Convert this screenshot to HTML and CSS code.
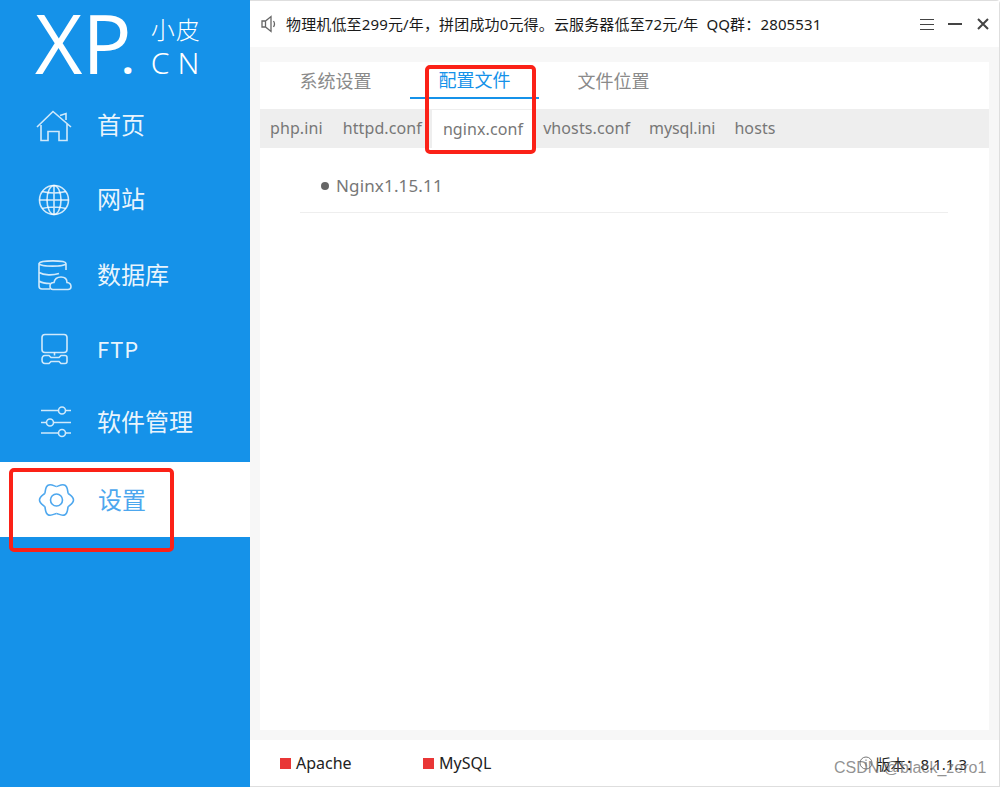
FILE: index.html
```html
<!DOCTYPE html>
<html lang="zh-CN">
<head>
<meta charset="utf-8">
<title>小皮面板</title>
<link rel="stylesheet" href="styles.css">
</head>
<body>
<div class="app">
  <aside class="sidebar">
    <div class="logo">
      <span class="logo-mark">XP<span class="logo-dot">.</span></span>
      <span class="logo-side"><span class="logo-cn">小皮</span><span class="logo-en">CN</span></span>
    </div>
    <nav class="nav">
      <a class="nav-item">
        <svg class="nav-icon" width="36" height="36" viewBox="0 0 36 36"><path d="M1 20 17 4.500 35 20M5 18V33.500H12V24.500H23V33.500H31V16M24 8.500 30 6.500V13"/></svg>
        <span class="nav-label">首页</span>
      </a>
      <a class="nav-item">
        <svg class="nav-icon" width="36" height="36" viewBox="0 0 36 36"><circle cx="18" cy="18" r="14.500"/><ellipse cx="18" cy="18" rx="7" ry="14.500"/><path d="M18 3.500V32.500M6 9.500Q18 12.500 30 9.500M3.500 18H32.500M6 26.500Q18 23.500 30 26.500"/></svg>
        <span class="nav-label nav-label-up">网站</span>
      </a>
      <a class="nav-item">
        <svg class="nav-icon" width="36" height="36" viewBox="0 0 36 36"><path d="M30 13V6.500C30 3 4 3 3 6.500V29Q3 32 6 32H14M3 6.500C3 10 30 10 30 6.500M3 15.500C8 18.500 17 18.500 23 16.500M3 24C6 26 11 26.500 14 26.500M17 32.500Q14 32.500 14 29 14 25.500 18 25.500 19 20 25 20 31 20 31 25.500 35 26 35 29.500 35 32.500 32 32.500Z"/></svg>
        <span class="nav-label">数据库</span>
      </a>
      <a class="nav-item">
        <svg class="nav-icon" width="36" height="36" viewBox="0 0 36 36"><rect x="6" y="2.500" width="25" height="18" rx="3"/><path d="M18.500 20.500V23.500M9 23.500H13L15 25.500H23L25 23.500H29Q31 23.500 31 25.500V29.500Q31 31.500 29 31.500H25L23 29.500H15L13 31.500H9Q6 31.500 6 27.500 6 23.500 9 23.500Z"/></svg>
        <span class="nav-label nav-label-latin">FTP</span>
      </a>
      <a class="nav-item nav-item-raised">
        <svg class="nav-icon" width="36" height="36" viewBox="0 0 36 36"><path d="M5 6.500H22M30 6.500H35M5 18.500H10M18 18.500H35M5 29H22M30 29H35"/><circle cx="26" cy="6.500" r="3.500"/><circle cx="14" cy="18.500" r="3.500"/><circle cx="26" cy="29" r="3.500"/></svg>
        <span class="nav-label">软件管理</span>
      </a>
      <a class="nav-item nav-item-active">
        <svg class="nav-icon" width="36" height="36" viewBox="0 0 36 36"><circle cx="20.500" cy="18" r="6"/><g transform="translate(20.500 18)"><path d="M11.690 -6.750C12.440 -5.450 17 -3.500 17 0 17 3.500 12.440 5.450 11.690 6.750"/><path d="M11.690 -6.750C12.440 -5.450 17 -3.500 17 0 17 3.500 12.440 5.450 11.690 6.750" transform="rotate(60)"/><path d="M11.690 -6.750C12.440 -5.450 17 -3.500 17 0 17 3.500 12.440 5.450 11.690 6.750" transform="rotate(120)"/><path d="M11.690 -6.750C12.440 -5.450 17 -3.500 17 0 17 3.500 12.440 5.450 11.690 6.750" transform="rotate(180)"/><path d="M11.690 -6.750C12.440 -5.450 17 -3.500 17 0 17 3.500 12.440 5.450 11.690 6.750" transform="rotate(240)"/><path d="M11.690 -6.750C12.440 -5.450 17 -3.500 17 0 17 3.500 12.440 5.450 11.690 6.750" transform="rotate(300)"/></g></svg>
        <span class="nav-label">设置</span>
      </a>
    </nav>
  </aside>

  <main class="main">
    <header class="topbar">
      <svg class="speaker" width="15" height="18" viewBox="0 0 15 18"><path d="M1 6H4.500L10 1.500V16.500L4.500 12H1ZM4.500 6V12M12.500 6Q14.500 9 12.500 12"/></svg>
      <p class="notice">物理机低至299元/年，拼团成功0元得。云服务器低至72元/年&nbsp;&nbsp;QQ群：2805531</p>
      <div class="window-btns">
        <svg width="14" height="14" viewBox="0 0 14 14"><path class="thin" d="M0 2.500H14M0 7.500H14M0 12.500H14"/></svg>
        <svg width="14" height="14" viewBox="0 0 14 14"><path class="thick" d="M0 7H14"/></svg>
        <svg width="12" height="12" viewBox="0 0 12 12"><path class="thick" d="M1 1 11 11M11 1 1 11"/></svg>
      </div>
    </header>

    <section class="content">
      <div class="panel">
        <div class="tabs">
          <span class="tab">系统设置</span>
          <span class="tab tab-active">配置文件</span>
          <span class="tab">文件位置</span>
        </div>
        <div class="subtabs">
          <span class="subtab">php.ini</span>
          <span class="subtab">httpd.conf</span>
          <span class="subtab subtab-active">nginx.conf</span>
          <span class="subtab">vhosts.conf</span>
          <span class="subtab subtab-tight">mysql.ini</span>
          <span class="subtab">hosts</span>
        </div>
        <ul class="files">
          <li class="file">Nginx1.15.11</li>
        </ul>
      </div>
    </section>

    <footer class="statusbar">
      <span class="service"><i class="dot"></i>Apache</span>
      <span class="service"><i class="dot"></i>MySQL</span>
      <span class="version">
        <svg width="14" height="14" viewBox="0 0 14 14"><circle cx="7" cy="7" r="6"/><path d="M7 6V10.500M7 3.500V5"/></svg>
        版本：8.1.1.3
      </span>
    </footer>
  </main>

  <div class="mark mark-tab"></div>
  <div class="mark mark-nav"></div>
  <div class="watermark">CSDN @black_zero1</div>
</div>
</body>
</html>
```
FILE: styles.css
```css
* { box-sizing: border-box; }
html, body { margin: 0; padding: 0; }
body {
  font-family: "Noto Sans", "Noto Sans CJK SC", sans-serif;
  background: #fff;
}
.app {
  position: relative;
  display: flex;
  width: 1000px;
  height: 787px;
  overflow: hidden;
}

/* Sidebar */
.sidebar {
  flex: 0 0 250px;
  background: #1592e9;
  color: #fff;
}
.logo {
  display: flex;
  height: 87px;
  padding-left: 35px;
  align-items: flex-start;
}
.logo-mark {
  font-family: "Open Sans", sans-serif;
  font-size: 82px;
  line-height: 84px;
  letter-spacing: 0;
  white-space: nowrap;
}
.logo-dot { font-size: 42px; margin-left: -10px; font-weight: 700; }
.logo-side {
  display: flex;
  flex-direction: column;
  margin-left: 17px;
  padding-top: 11px;
}
.logo-cn {
  font-size: 24px;
  line-height: 36px;
  font-family: "Noto Sans CJK SC", sans-serif;
  font-weight: 300;
  letter-spacing: 1px;
}
.logo-en {
  font-size: 30px;
  line-height: 32px;
  font-weight: 300;
  letter-spacing: 8px;
  font-family: "Noto Sans", sans-serif;
}
.nav { display: flex; flex-direction: column; }
.nav-item {
  display: flex;
  align-items: center;
  height: 75px;
  padding-left: 36px;
  color: rgba(255, 255, 255, .92);
}
.nav-item-raised { padding-bottom: 6px; }
.nav-icon {
  flex: none;
  fill: none;
  stroke: rgba(255, 255, 255, .8);
  stroke-width: 1.6;
  overflow: visible;
}
.nav-label {
  margin: -2px 0 0 25px;
  font: 400 24px/32px "Noto Sans CJK SC", sans-serif;
}
.nav-label-up { margin-top: -3px; }
.nav-label-latin { font-size: 22px; letter-spacing: 1px; margin-top: -3px; }
.nav-item-active { background: #fff; color: #4da7ee; }
.nav-item-active .nav-icon { stroke: #4da7ee; }
.nav-item-active .nav-label { margin-left: 26px; }

/* Main */
.main {
  flex: 1;
  display: flex;
  flex-direction: column;
  min-width: 0;
  border-top: 1px solid #dedede;
  border-right: 1px solid #dedede;
  border-bottom: 1px solid #dedede;
  border-radius: 0 4px 0 0;
}
.topbar {
  display: flex;
  align-items: center;
  height: 46px;
  padding: 0 10px 0 11px;
  background: #fff;
}
.speaker { fill: none; stroke: #666; stroke-width: 1.3; }
.notice {
  flex: 1;
  margin: 0 0 0 10px;
  font-size: 15px;
  line-height: 20px;
  letter-spacing: .15px;
  color: #1a1a1a;
  white-space: nowrap;
}
.window-btns { display: flex; align-items: center; gap: 14px; }
.window-btns svg { fill: none; stroke: #444; display: block; }
.window-btns svg:last-child { margin-left: 1px; }
.thin { stroke-width: 1; }
.thick { stroke-width: 2; }

.content {
  flex: 1;
  background: #f7f7f7;
  padding: 15px 10px 10px;
  min-height: 0;
}
.panel { background: #fff; height: 100%; }
.tabs {
  display: flex;
  gap: 10px;
  padding: 0 0 0 11px;
  height: 47px;
}
.tab {
  width: 129px;
  height: 37px;
  text-align: center;
  font: 18px/37px "Noto Sans CJK SC", sans-serif;
  color: #8a8a8a;
}
.tab-active {
  color: #1592e9;
  border-bottom: 2px solid #1592e9;
  line-height: 35px;
}
.subtabs {
  display: flex;
  align-items: stretch;
  height: 39px;
  background: #eee;
}
.subtab {
  padding: 0 10px;
  font-size: 16px;
  line-height: 39px;
  letter-spacing: .1px;
  color: #777;
}
.subtab-active { background: #fff; margin-top: 1px; line-height: 38px; padding: 0 10px 0 11px; }
.subtab-tight { padding: 0 9px; letter-spacing: -.1px; }
.files {
  list-style: none;
  margin: 0 41px 0 40px;
  padding: 21px 0 0 21px;
  height: 65px;
  border-bottom: 1px solid #eee;
}
.file {
  display: flex;
  align-items: center;
  gap: 7px;
  font-size: 17px;
  line-height: 34px;
  letter-spacing: .15px;
  color: #777;
}
.file::before {
  content: "";
  width: 8px;
  height: 8px;
  border-radius: 50%;
  background: #666;
}

/* Status bar */
.statusbar {
  display: flex;
  align-items: center;
  height: 46px;
  padding: 0 30px;
  background: #fff;
  font-size: 16px;
  color: #222;
}
.service {
  display: flex;
  align-items: center;
  width: 143px;
}
.dot {
  width: 11px;
  height: 11px;
  margin-right: 5px;
  background: #e93636;
}
.version {
  display: flex;
  align-items: center;
  gap: 3px;
  margin-left: auto;
  margin-right: 2px;
  font-size: 15px;
  white-space: nowrap;
}
.version svg { fill: none; stroke: #777; stroke-width: 1; }

/* Annotations over the screenshot */
.mark {
  position: absolute;
  border: 4px solid #fb2117;
  border-radius: 5px;
}
.mark-tab { left: 425px; top: 65px; width: 111px; height: 89px; }
.mark-nav { left: 9px; top: 468px; width: 165px; height: 84px; }
.watermark {
  position: absolute;
  left: 834px;
  top: 759px;
  font: 16px/18px "Liberation Sans", sans-serif;
  color: rgba(110, 110, 110, .75);
  white-space: nowrap;
}
```
